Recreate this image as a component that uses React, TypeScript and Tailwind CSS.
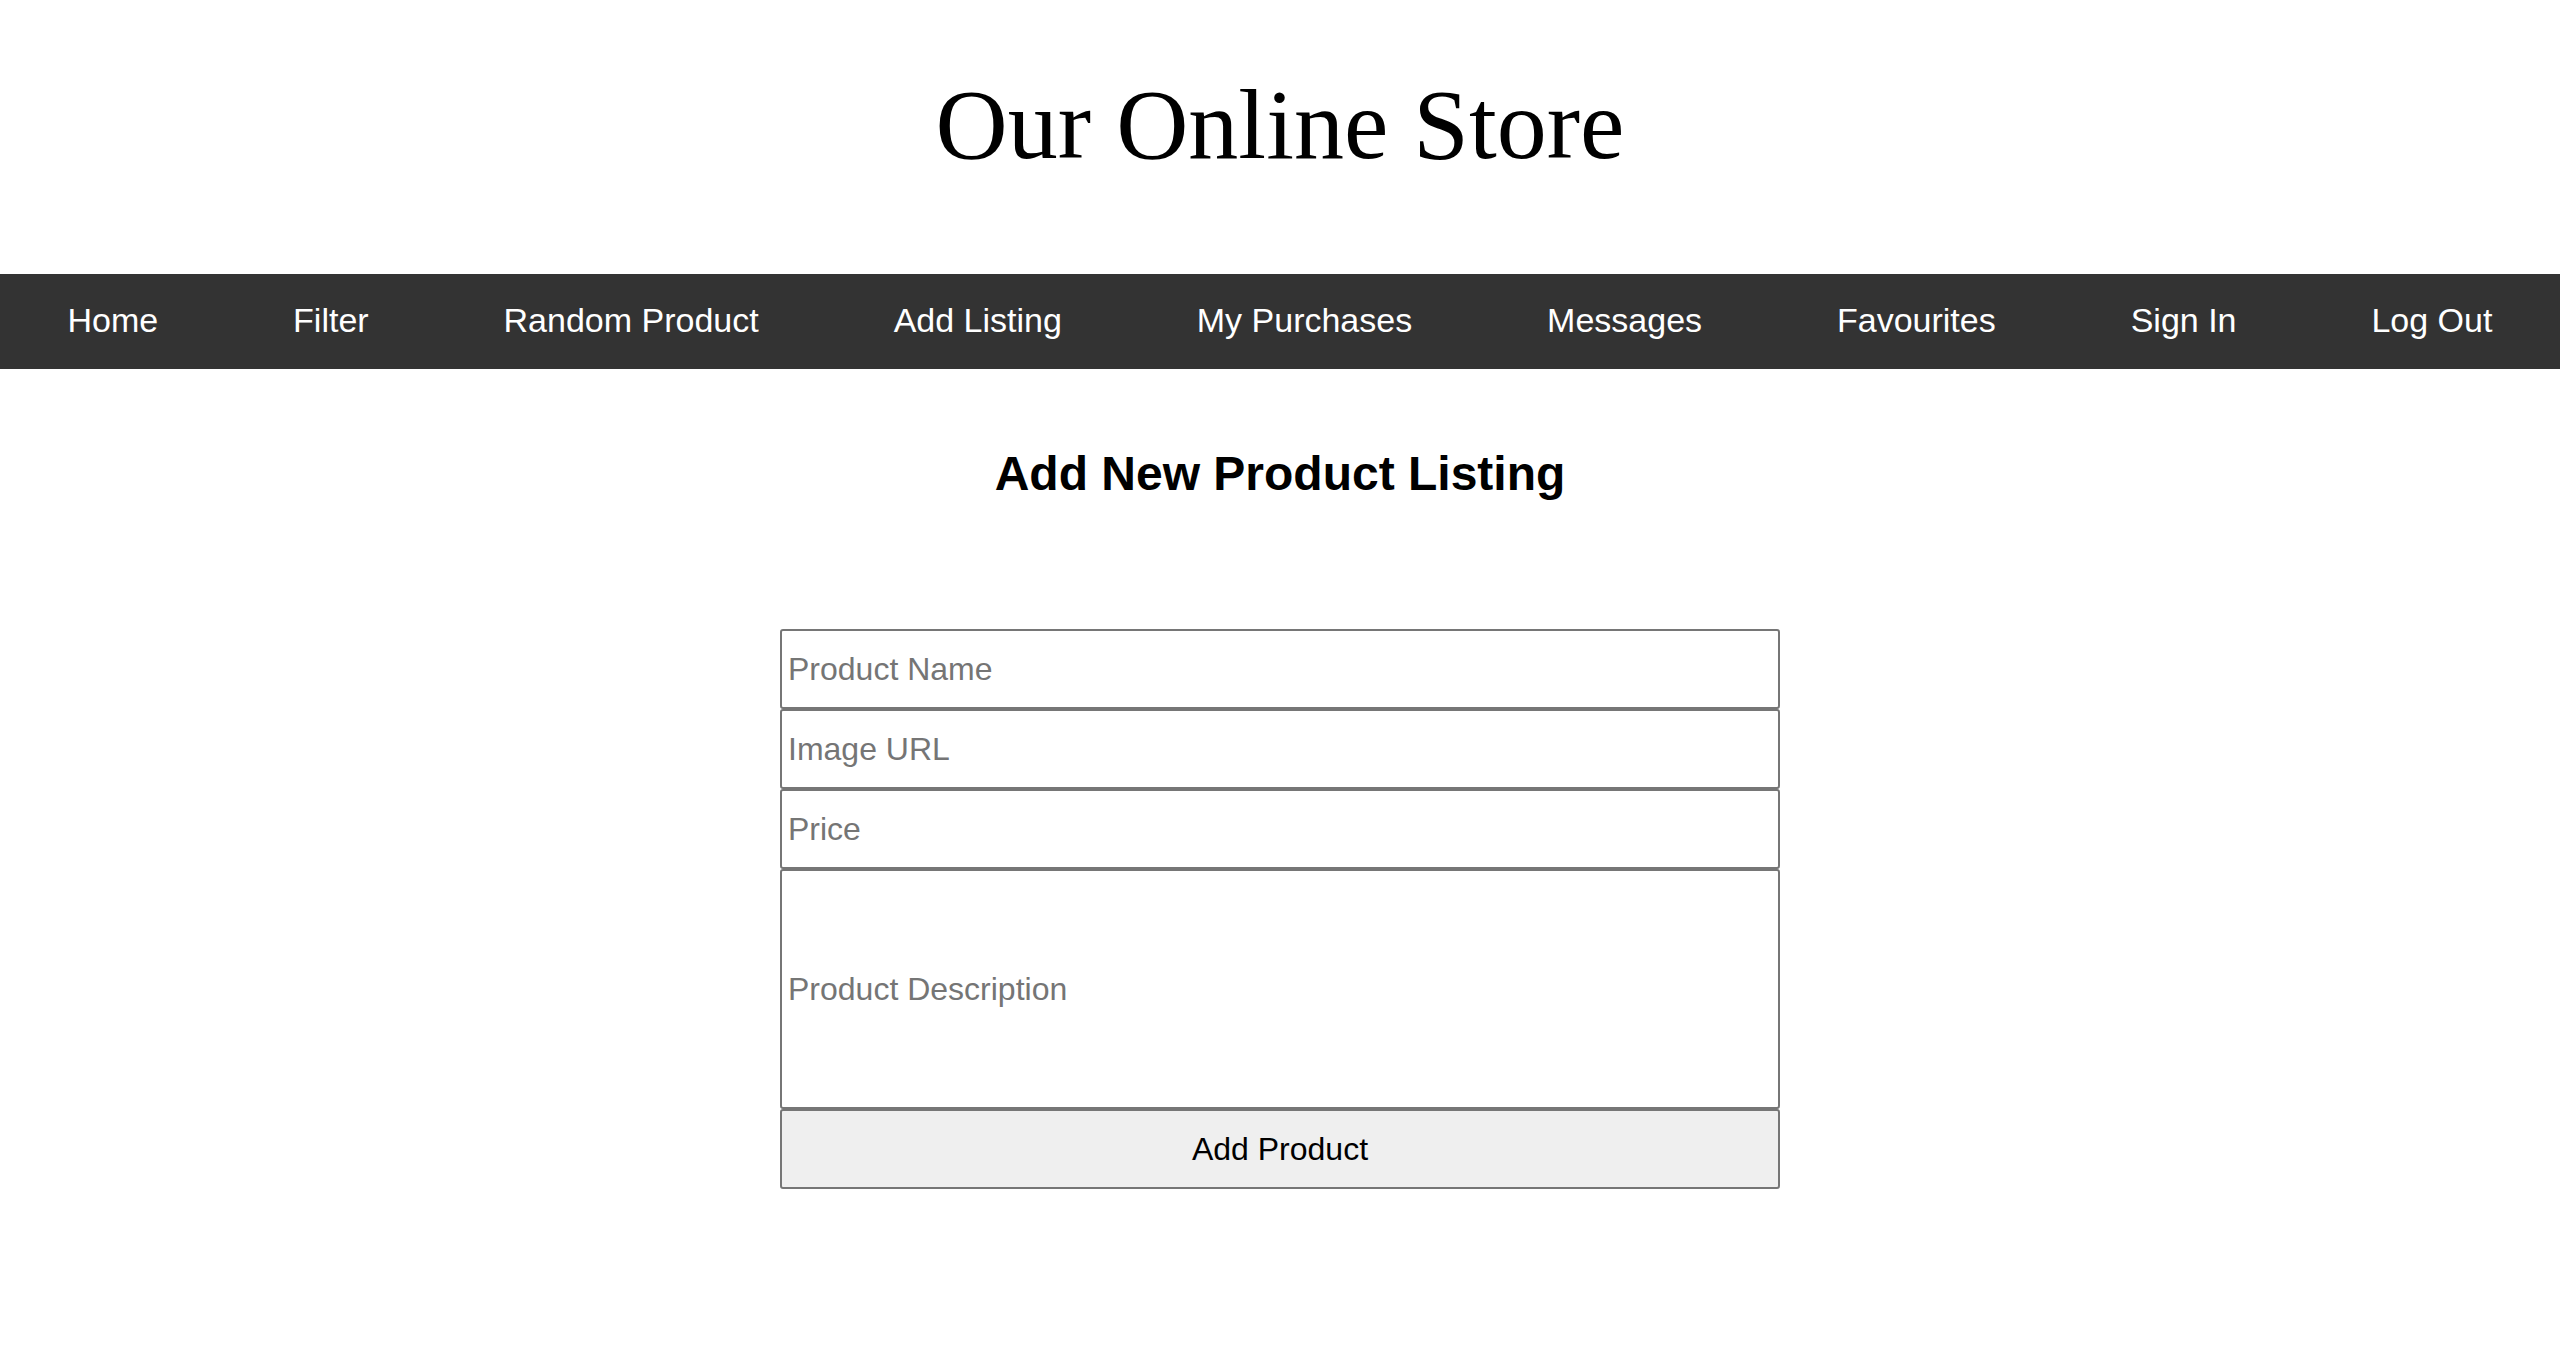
const NAV_ITEMS = [
  "Home",
  "Filter",
  "Random Product",
  "Add Listing",
  "My Purchases",
  "Messages",
  "Favourites",
  "Sign In",
  "Log Out",
];

const inputClass =
  "block w-full h-[80px] px-[6px] border-2 border-[#767676] rounded-[3px] bg-white text-[32px] text-black placeholder:text-[#757575] outline-none";

export default function App() {
  return (
    <div className="min-h-[1366px] bg-white font-['Liberation_Sans',Arial,sans-serif]">
      <header className="pt-[67px] pb-[92px]">
        <h1 className="text-center text-[100px] leading-[115px] font-normal text-black font-['Liberation_Serif','Times_New_Roman',serif]">
          Our Online Store
        </h1>
      </header>

      <nav className="flex h-[95px] items-center justify-around bg-[#333333] pb-[3px]">
        {NAV_ITEMS.map(item => (
          <a key={item} href="#" className="text-[34px] leading-none text-white">
            {item}
          </a>
        ))}
      </nav>

      <main className="flex flex-col items-center">
        <h2 className="mt-[77px] text-[48px] leading-[55px] font-bold text-black">Add New Product Listing</h2>

        <form className="mt-[128px] w-[1000px]" onSubmit={e => e.preventDefault()}>
          <input type="text" placeholder="Product Name" className={inputClass} />
          <input type="text" placeholder="Image URL" className={inputClass} />
          <input type="text" placeholder="Price" className={inputClass} />
          <input
            type="text"
            placeholder="Product Description"
            className="block w-full h-[240px] px-[6px] border-2 border-[#767676] rounded-[3px] bg-white text-[32px] text-black placeholder:text-[#757575] outline-none"
          />
          <button
            type="submit"
            className="block w-full h-[80px] border-2 border-[#767676] rounded-[3px] bg-[#efefef] text-[32px] text-black"
          >
            Add Product
          </button>
        </form>
      </main>
    </div>
  );
}
